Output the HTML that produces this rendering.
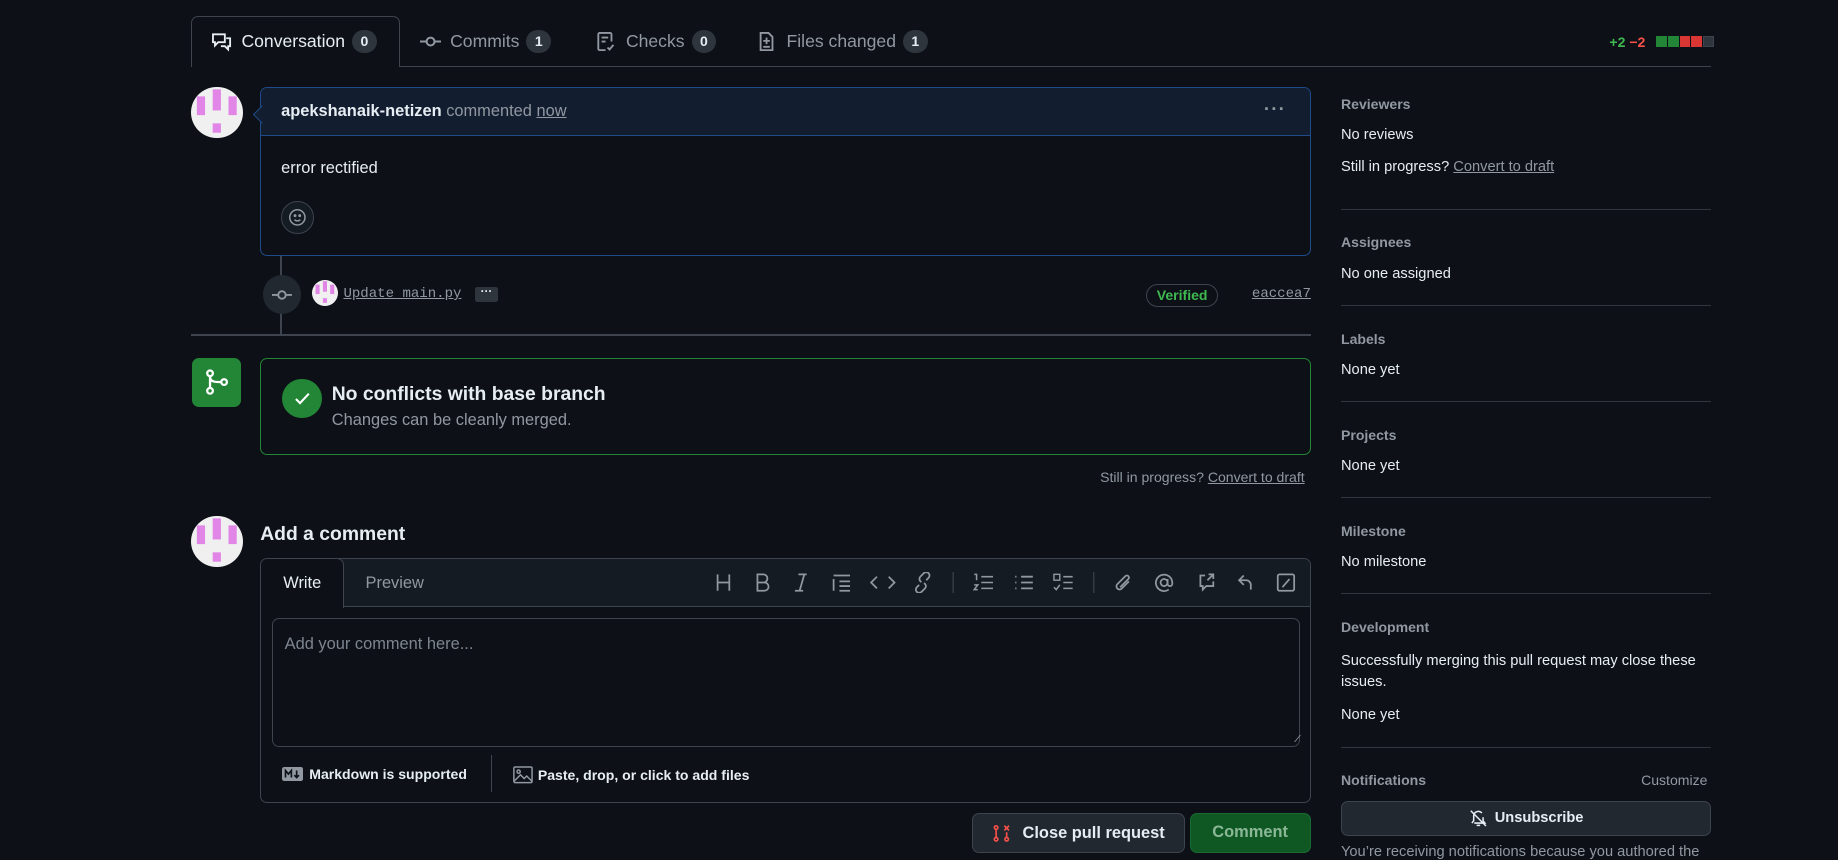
<!DOCTYPE html>
<html><head><meta charset="utf-8">
<style>
*{box-sizing:border-box;margin:0;padding:0}
html,body{width:1838px;height:860px;overflow:hidden;background:#0d1117}
#w{zoom:1.17219;position:relative;width:1568px;height:734px;font-family:"Liberation Sans",sans-serif;color:#e6edf3;font-size:14px;overflow:hidden}
.a{position:absolute}
.mut{color:#9198a1}
.cnt{display:inline-block;background:#2f353d;color:#e6edf3;border-radius:10px;font-size:12px;font-weight:bold;min-width:21px;height:20px;line-height:20px;text-align:center;margin-left:6px}
.tab{position:absolute;top:14px;height:43px;display:flex;align-items:center;font-size:15px;color:#9198a1}
.tab svg{margin-right:8px}
.av{position:absolute;width:44px;height:44px;border-radius:50%;background:#f0f0f0;overflow:hidden}
.sh{position:absolute;left:1144px;font-size:12px;font-weight:bold;color:#9198a1}
.st{position:absolute;left:1144px;font-size:12.5px;color:#e6edf3}
.hr{position:absolute;left:1144px;width:316px;height:1px;background:#30363d}
.ic{position:absolute;top:488px}
</style></head><body><div id="w">

<!-- tabs -->
<div class="a" style="left:163px;top:56px;width:1297px;height:1px;background:#3d444d"></div>
<div class="a" style="left:163px;top:14px;width:178px;height:43px;border:1px solid #3d444d;border-bottom:none;border-radius:6px 6px 0 0;background:#0d1117"></div>
<div class="tab" style="left:180px;color:#e6edf3">
<svg width="18" height="18" viewBox="0 0 16 16" fill="none" stroke="#e6edf3" stroke-width="1.4"><path d="M1.5 2.5h9v6h-5l-2.5 2.5v-2.5h-1.5z"/><path d="M11.5 5.5h3v6h-1.5v2.5l-2.5-2.5h-3"/></svg>Conversation<span class="cnt">0</span></div>
<div class="tab" style="left:358px">
<svg width="18" height="18" viewBox="0 0 16 16" fill="none" stroke="#9198a1" stroke-width="1.5"><circle cx="8" cy="8" r="3"/><path d="M0 8h5M11 8h5"/></svg>Commits<span class="cnt">1</span></div>
<div class="tab" style="left:508px">
<svg width="18" height="18" viewBox="0 0 16 16" fill="none" stroke="#9198a1" stroke-width="1.4"><path d="M8 14.5H3.5a1 1 0 0 1-1-1v-11a1 1 0 0 1 1-1h8a1 1 0 0 1 1 1V8"/><path d="M5 5h5M5 8h3M9.5 12.5l1.5 1.5 3-3.5"/></svg>Checks<span class="cnt">0</span></div>
<div class="tab" style="left:645px">
<svg width="18" height="18" viewBox="0 0 16 16" fill="none" stroke="#9198a1" stroke-width="1.4"><path d="M3.5 1.5h6l3 3v10h-9z"/><path d="M8 5v5M5.5 7.5h5M5.5 12h5"/></svg>Files changed<span class="cnt">1</span></div>
<div class="a" style="left:1373px;top:29px;font-size:12px;font-weight:bold"><span style="color:#3fb950">+2</span> <span style="color:#f85149">−2</span></div>
<div class="a" style="left:1413px;top:31px;display:flex;gap:1px">
<i style="width:9px;height:9px;background:#238636"></i><i style="width:9px;height:9px;background:#238636"></i><i style="width:9px;height:9px;background:#da3633"></i><i style="width:9px;height:9px;background:#da3633"></i><i style="width:9px;height:9px;background:#2f353d;border:1px solid #3d444d"></i></div>

<!-- comment -->
<div class="av" style="left:163px;top:74px"><svg width="44" height="44"><rect x="5" y="8" width="7" height="16" fill="#e185e6"/><rect x="18.5" y="2" width="7" height="18" fill="#e185e6"/><rect x="32" y="8" width="7" height="16" fill="#e185e6"/><rect x="18.5" y="31" width="7" height="8" fill="#e185e6"/></svg></div>
<div class="a" style="left:222px;top:74px;width:896px;height:144px;border:1px solid #1f4b8a;border-radius:6px;overflow:hidden">
<div style="height:41px;background:#121d2f;border-bottom:1px solid #1f4b8a;padding:12px 17px;font-size:14px"><b>apekshanaik-netizen</b> <span class="mut">commented <u>now</u></span><span style="position:absolute;right:20px;top:9px;color:#9198a1;font-size:16px;font-weight:bold;letter-spacing:1px">···</span></div>
<div style="padding:20px 17px;font-size:14px">error rectified</div>
<div style="position:absolute;left:17px;top:97px;width:28px;height:28px;border-radius:50%;border:1px solid #3d444d;background:#151b23"><svg style="margin:5px" width="16" height="16" viewBox="0 0 16 16" fill="none" stroke="#9198a1" stroke-width="1.3"><circle cx="8" cy="8" r="6.5"/><path d="M5.5 10c1.3 1.3 3.7 1.3 5 0"/><circle cx="6" cy="6.5" r=".6" fill="#9198a1"/><circle cx="10" cy="6.5" r=".6" fill="#9198a1"/></svg></div>
</div>
<div class="a" style="left:162px;top:92px;width:11px;height:11px;background:#121d2f;border-left:1px solid #1f4b8a;border-bottom:1px solid #1f4b8a;transform:translateX(56px) rotate(45deg)"></div>

<!-- timeline -->
<div class="a" style="left:239px;top:218px;width:2px;height:68px;background:#3d444d"></div>
<div class="a" style="left:224px;top:235px;width:33px;height:33px;border-radius:50%;background:#212830"><svg style="margin:8px" width="17" height="17" viewBox="0 0 16 16" fill="none" stroke="#9198a1" stroke-width="1.5"><circle cx="8" cy="8" r="3"/><path d="M0 8h5M11 8h5"/></svg></div>
<div class="av" style="left:266px;top:239px;width:22px;height:22px"><svg width="22" height="22"><rect x="3" y="4" width="3.5" height="8" fill="#e185e6"/><rect x="9.3" y="1" width="3.5" height="9" fill="#e185e6"/><rect x="15.5" y="4" width="3.5" height="8" fill="#e185e6"/><rect x="9.3" y="15.5" width="3.5" height="4" fill="#e185e6"/></svg></div>
<div class="a mut" style="left:293px;top:244px;font-family:'Liberation Mono',monospace;font-size:12px;text-decoration:underline">Update main.py</div>
<div class="a" style="left:405px;top:245px;width:20px;height:13px;background:#2f353d;border-radius:2px;color:#e6edf3;font-size:10px;text-align:center;line-height:9px;font-weight:bold">···</div>
<div class="a" style="left:978px;top:242px;width:61px;height:20px;border:1px solid #3d444d;border-radius:10px;color:#3fb950;font-size:12px;font-weight:bold;text-align:center;line-height:18px">Verified</div>
<div class="a mut" style="left:1068px;top:244px;font-family:'Liberation Mono',monospace;font-size:12px;text-decoration:underline">eaccea7</div>
<div class="a" style="left:163px;top:285px;width:955px;height:2px;background:#3d444d"></div>

<!-- merge -->
<div class="a" style="left:164px;top:305px;width:42px;height:42px;border-radius:6px;background:#238636"><svg style="margin:9px" width="24" height="24" viewBox="0 0 16 16" fill="none" stroke="#fff" stroke-width="1.3"><circle cx="4" cy="3" r="1.6"/><circle cx="4" cy="13" r="1.6"/><circle cx="12" cy="8" r="1.6"/><path d="M4 4.6v6.8M4 5c0 3 3 3 6.4 3"/></svg></div>
<div class="a" style="left:222px;top:305px;width:896px;height:83px;border:1px solid #238636;border-radius:6px"></div>
<div class="a" style="left:241px;top:323px;width:34px;height:34px;border-radius:50%;background:#238636"><svg style="margin:9px" width="16" height="16" viewBox="0 0 16 16" fill="none" stroke="#fff" stroke-width="1.8"><path d="M2.5 8.5l3.5 3.5 7.5-8"/></svg></div>
<div class="a" style="left:283px;top:327px;font-size:16.5px;font-weight:bold">No conflicts with base branch</div>
<div class="a mut" style="left:283px;top:351px;font-size:14px">Changes can be cleanly merged.</div>
<div class="a mut" style="right:455px;top:400px;font-size:12px">Still in progress? <u>Convert to draft</u></div>

<!-- add comment -->
<div class="av" style="left:163px;top:440px"><svg width="44" height="44"><rect x="5" y="8" width="7" height="16" fill="#e185e6"/><rect x="18.5" y="2" width="7" height="18" fill="#e185e6"/><rect x="32" y="8" width="7" height="16" fill="#e185e6"/><rect x="18.5" y="31" width="7" height="8" fill="#e185e6"/></svg></div>
<div class="a" style="left:222px;top:446px;font-size:16.5px;font-weight:bold">Add a comment</div>
<div class="a" style="left:222px;top:476px;width:896px;height:209px;border:1px solid #3d444d;border-radius:6px;overflow:hidden">
<div style="height:41px;background:#151b23;border-bottom:1px solid #3d444d"></div>
<div style="position:absolute;left:-1px;top:-1px;width:72px;height:43px;background:#0d1117;border:1px solid #3d444d;border-bottom:none;border-radius:6px 6px 0 0;text-align:center;line-height:42px;font-size:14px">Write</div>
<div class="mut" style="position:absolute;left:89px;top:13px;font-size:14px">Preview</div>
<div style="position:absolute;left:9px;top:50px;width:877px;height:110px;border:1px solid #3d444d;border-radius:6px"></div>
<div class="mut" style="position:absolute;left:20px;top:65px;font-size:14px;color:#7d8590">Add your comment here...</div>
<div style="position:absolute;left:196px;top:167px;width:1px;height:32px;background:#3d444d"></div>
<div style="position:absolute;left:18px;top:177px;font-size:12px;font-weight:bold;display:flex;align-items:center;color:#e6edf3"><svg width="18" height="12" viewBox="0 0 18 12" style="margin-right:5px"><rect width="18" height="12" rx="2" fill="#9198a1"/><path d="M3 9V3l2.5 3L8 3v6M12.5 3v6M10.5 7l2 2 2-2" stroke="#0d1117" stroke-width="1.4" fill="none"/></svg>Markdown is supported</div>
<div style="position:absolute;left:215px;top:177px;font-size:12px;font-weight:bold;display:flex;align-items:center"><svg width="17" height="15" viewBox="0 0 16 14" fill="none" stroke="#9198a1" stroke-width="1.2" style="margin-right:4px"><rect x=".7" y=".7" width="14.6" height="12.6" rx="1"/><circle cx="4.5" cy="4.5" r="1.3"/><path d="M1 12l5-5 3 3 2-2 4 4"/></svg>Paste, drop, or click to add files</div>
</div>
<!-- toolbar -->
<svg class="ic" style="left:609px" width="500" height="18" viewBox="0 0 500 18" fill="none" stroke="#9198a1" stroke-width="1.5">
<path d="M3 2v14M13 2v14M3 9h10"/>
<path d="M37 2h5a3.5 3.5 0 0 1 0 7h-5zM37 9h6a3.5 3.5 0 0 1 0 7h-6z"/>
<path d="M72 2h7M69 16h7M77 2l-4 14"/>
<path d="M102 3h14M102 6v10M107 8h9M107 12h9M107 16h9" />
<path d="M139 4l-5 5 5 5M149 4l5 5-5 5"/>
<path d="M175 11l-2 2a2.8 2.8 0 0 0 4 4l3-3a2.8 2.8 0 0 0-1-4.5M181 7l2-2a2.8 2.8 0 0 0-4-4l-3 3a2.8 2.8 0 0 0 1 4.5"/>
<path d="M204 0v18" stroke="#3d444d" stroke-width="1"/>
<path d="M228 4h10M228 9h10M228 14h10M222 2h2v5M222 11h3l-3 4h3" stroke-width="1.3"/>
<path d="M262 4h10M262 9h10M262 14h10M257 4h1M257 9h1M257 14h1"/>
<rect x="290" y="2" width="5" height="5" stroke-width="1.2"/><path d="M298 4h8M298 14h8M290 13l2 2 3-4M298 9h8" stroke-width="1.3"/>
<path d="M324 0v18" stroke="#3d444d" stroke-width="1"/>
<path d="M354 8l-6 6a2.5 2.5 0 0 1-4-3.5l7-7a1.7 1.7 0 0 1 2.5 2.5l-7 7" />
<circle cx="384" cy="9" r="3"/><path d="M387 6v4a2 2 0 0 0 4 0v-1a7 7 0 1 0-3 6"/>
<path d="M419 3h-4v9h2v3l3-3h6v-4M421 7l5-5M422 2h4v4"/>
<path d="M452 3l-4 4 4 4M448 7h6a4 4 0 0 1 4 4v4"/>
<rect x="481" y="2" width="14" height="14" rx="1.5"/><path d="M485 13l6-7"/>
</svg>
<div class="a" style="left:1101px;top:627px;width:6px;height:6px;border-right:1px solid #9198a1;transform:skewX(-40deg)"></div>

<!-- buttons -->
<div class="a" style="left:829px;top:694px;width:182px;height:34px;background:#212830;border:1px solid #3d444d;border-radius:6px;font-size:14px;font-weight:bold;display:flex;align-items:center;justify-content:center"><svg width="16" height="16" viewBox="0 0 16 16" fill="none" stroke="#f85149" stroke-width="1.4" style="margin-right:10px"><circle cx="3.5" cy="3" r="1.5"/><circle cx="3.5" cy="13" r="1.5"/><circle cx="12.5" cy="13" r="1.5"/><path d="M3.5 4.5v7M12.5 7v4.5M10.5 1.5l4 4M14.5 1.5l-4 4"/></svg>Close pull request</div>
<div class="a" style="left:1015px;top:694px;width:103px;height:34px;background:#105823;border:1px solid #1a6b32;border-radius:6px;font-size:14px;font-weight:bold;color:#8ab897;text-align:center;line-height:32px">Comment</div>

<!-- sidebar -->
<div class="sh" style="top:82px">Reviewers</div>
<div class="st" style="top:108px">No reviews</div>
<div class="st" style="top:136px">Still in progress? <span class="mut" style="text-decoration:underline">Convert to draft</span></div>
<div class="hr" style="top:178px"></div>
<div class="sh" style="top:200px">Assignees</div>
<div class="st" style="top:227px">No one assigned</div>
<div class="hr" style="top:260px"></div>
<div class="sh" style="top:282px">Labels</div>
<div class="st" style="top:309px">None yet</div>
<div class="hr" style="top:342px"></div>
<div class="sh" style="top:364px">Projects</div>
<div class="st" style="top:391px">None yet</div>
<div class="hr" style="top:424px"></div>
<div class="sh" style="top:446px">Milestone</div>
<div class="st" style="top:473px">No milestone</div>
<div class="hr" style="top:506px"></div>
<div class="sh" style="top:528px">Development</div>
<div class="st" style="top:555px;width:316px;line-height:18px">Successfully merging this pull request may close these issues.</div>
<div class="st" style="top:603px">None yet</div>
<div class="hr" style="top:637px"></div>
<div class="sh" style="top:659px">Notifications</div>
<div class="a mut" style="left:1400px;top:659px;font-size:12px">Customize</div>
<div class="a" style="left:1144px;top:683px;width:316px;height:30px;background:#212830;border:1px solid #3d444d;border-radius:6px;font-size:12.5px;font-weight:bold;display:flex;align-items:center;justify-content:center"><svg width="16" height="16" viewBox="0 0 16 16" fill="none" stroke="#e6edf3" stroke-width="1.3" style="margin-right:6px"><path d="M4 6a4 4 0 0 1 7-2.6M12 7v3l1.5 2h-9M4 6v4L2.5 12M6.5 14h3M1.5 1.5l13 13"/></svg>Unsubscribe</div>
<div class="a mut" style="left:1144px;top:720px;font-size:12.5px;white-space:nowrap">You’re receiving notifications because you authored the</div>
</div></body></html>
